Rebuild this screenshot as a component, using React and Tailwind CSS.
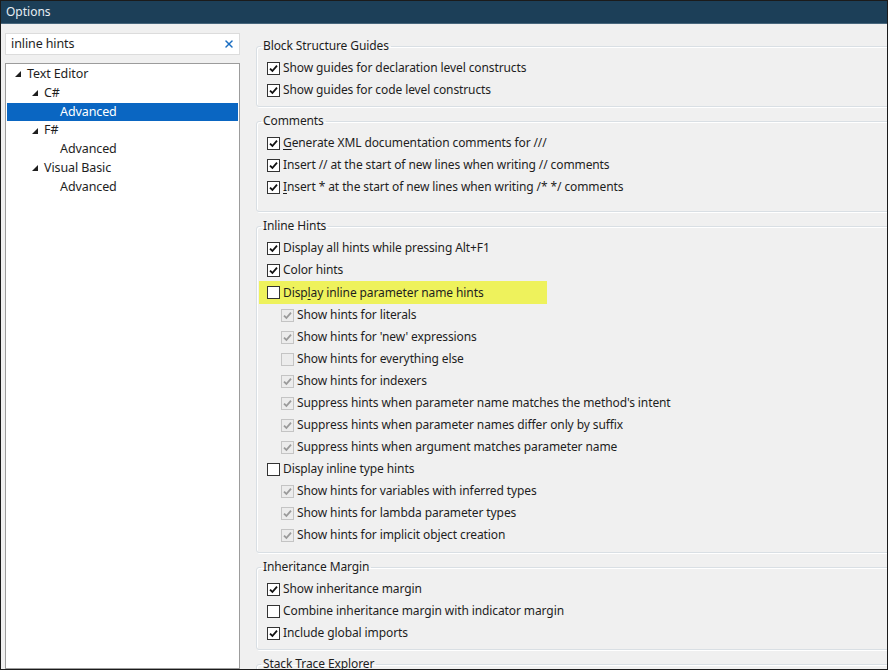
import { X } from "lucide-react";

const groups = [
  {
    title: "Block Structure Guides",
    extra: 0,
    items: [
      { label: "Show guides for declaration level constructs", checked: true },
      { label: "Show guides for code level constructs", checked: true },
    ],
  },
  {
    title: "Comments",
    extra: 8,
    items: [
      { pre: "", u: "G", post: "enerate XML documentation comments for ///", checked: true },
      { label: "Insert // at the start of new lines when writing // comments", checked: true },
      { pre: "", u: "I", post: "nsert * at the start of new lines when writing /* */ comments", checked: true },
    ],
  },
  {
    title: "Inline Hints",
    extra: 1,
    items: [
      { label: "Display all hints while pressing Alt+F1", checked: true },
      { label: "Color hints", checked: true },
      { pre: "Disp", u: "l", post: "ay inline parameter name hints", checked: false, highlight: true },
      { label: "Show hints for literals", checked: true, sub: true },
      { label: "Show hints for 'new' expressions", checked: true, sub: true },
      { label: "Show hints for everything else", checked: false, sub: true },
      { label: "Show hints for indexers", checked: true, sub: true },
      { label: "Suppress hints when parameter name matches the method's intent", checked: true, sub: true },
      { label: "Suppress hints when parameter names differ only by suffix", checked: true, sub: true },
      { label: "Suppress hints when argument matches parameter name", checked: true, sub: true },
      { label: "Display inline type hints", checked: false },
      { label: "Show hints for variables with inferred types", checked: true, sub: true },
      { label: "Show hints for lambda parameter types", checked: true, sub: true },
      { label: "Show hints for implicit object creation", checked: true, sub: true },
    ],
  },
  {
    title: "Inheritance Margin",
    extra: 0,
    items: [
      { label: "Show inheritance margin", checked: true },
      { label: "Combine inheritance margin with indicator margin", checked: false },
      { label: "Include global imports", checked: true },
    ],
  },
  {
    title: "Stack Trace Explorer",
    extra: 0,
    items: [],
  },
];

const tree = [
  { text: "Text Editor", level: 0, open: true },
  { text: "C#", level: 1, open: true },
  { text: "Advanced", level: 2, selected: true },
  { text: "F#", level: 1, open: true },
  { text: "Advanced", level: 2 },
  { text: "Visual Basic", level: 1, open: true },
  { text: "Advanced", level: 2 },
];

function Box({ checked, disabled }) {
  return (
    <span
      className={
        "w-[13px] h-[13px] shrink-0 flex items-center justify-center border " +
        (disabled ? "border-[#c4c4c4] bg-[#ececec]" : "border-[#333333] bg-white")
      }
    >
      {checked ? (
        <svg viewBox="0 0 11 11" className="w-[11px] h-[11px]">
          <path
            d="M2 5.6 L4.4 8 L9 2.6"
            fill="none"
            stroke={disabled ? "#9a9a9a" : "#111111"}
            strokeWidth="1.8"
          />
        </svg>
      ) : null}
    </span>
  );
}

function Row({ item }) {
  return (
    <div
      className={
        "flex items-center gap-[3px] " +
        (item.sub ? "pl-[14px] " : "") +
        (item.highlight ? "bg-[#eef25c] -ml-[8px] pl-[8px] w-[288px] h-[23px]" : "h-[22px]")
      }
    >
      <Box checked={item.checked} disabled={item.sub} />
      <span className="whitespace-nowrap">
        {item.label ?? (
          <>
            {item.pre}
            <span className="underline underline-offset-2">{item.u}</span>
            {item.post}
          </>
        )}
      </span>
    </div>
  );
}

export default function App() {
  return (
    <div className="w-[888px] h-[670px] overflow-hidden bg-[#f0f0f0] border border-[#1b1b1b] flex flex-col font-['Noto_Sans',sans-serif] text-[#1e1e1e] text-[12px] tracking-[-0.1px]">
      {/* title bar */}
      <div className="h-[23px] shrink-0 bg-[#1c3f58] border-b border-[#47667c] flex items-center pl-[5px] text-[12px] tracking-normal text-[#e6edf3]">
        Options
      </div>

      <div className="flex flex-1 min-h-0">
        {/* LEFT: search + tree */}
        <div className="w-[239px] shrink-0 pl-[4px] pt-[9px] flex flex-col">
          <div className="h-[22px] bg-white border border-[#dcdcdc] flex items-center justify-between pl-[5px] pr-[4px] text-[12.5px]">
            <span>inline hints</span>
            <X size={12} strokeWidth={3} className="text-[#1b6ec2]" />
          </div>
          <div className="mt-[8px] flex-1 bg-white border border-[#9c9c9c] pt-[1px] px-[1px] text-[12.5px]">
            {tree.map((t, i) => (
              <div
                key={i}
                className={
                  "h-[18.75px] flex items-center " +
                  (t.selected ? "bg-[#0a66c2] text-white" : "")
                }
              >
                <span
                  className={
                    "flex items-center shrink-0 " +
                    (t.level === 0 ? "w-[20px] pl-[8px]" : t.level === 1 ? "w-[37px] pl-[25px]" : "w-[53px]")
                  }
                >
                  {t.open ? (
                    <svg viewBox="0 0 6 6" className="w-[6px] h-[6px]">
                      <path d="M6 0 L6 6 L0 6 Z" fill="#1e1e1e" />
                    </svg>
                  ) : null}
                </span>
                <span>{t.text}</span>
              </div>
            ))}
          </div>
        </div>

        {/* RIGHT: options */}
        <div className="flex-1 min-w-0 overflow-hidden pl-[16px] pt-[13px]">
          {groups.map((g) => (
            <fieldset
              key={g.title}
              className="w-[660px] mb-[5px] border border-[#d9dfe4] rounded-[3px] pl-[10px] pr-2 shadow-[inset_1px_1px_0_#ffffff,1px_1px_0_#ffffff]"
              style={{ paddingBottom: 5 + g.extra }}
            >
              <legend className="ml-[-6px] px-[2px] leading-[18px] mb-[2px]">{g.title}</legend>
              {g.items.map((it, i) => (
                <Row key={i} item={it} />
              ))}
            </fieldset>
          ))}
        </div>
      </div>
    </div>
  );
}
